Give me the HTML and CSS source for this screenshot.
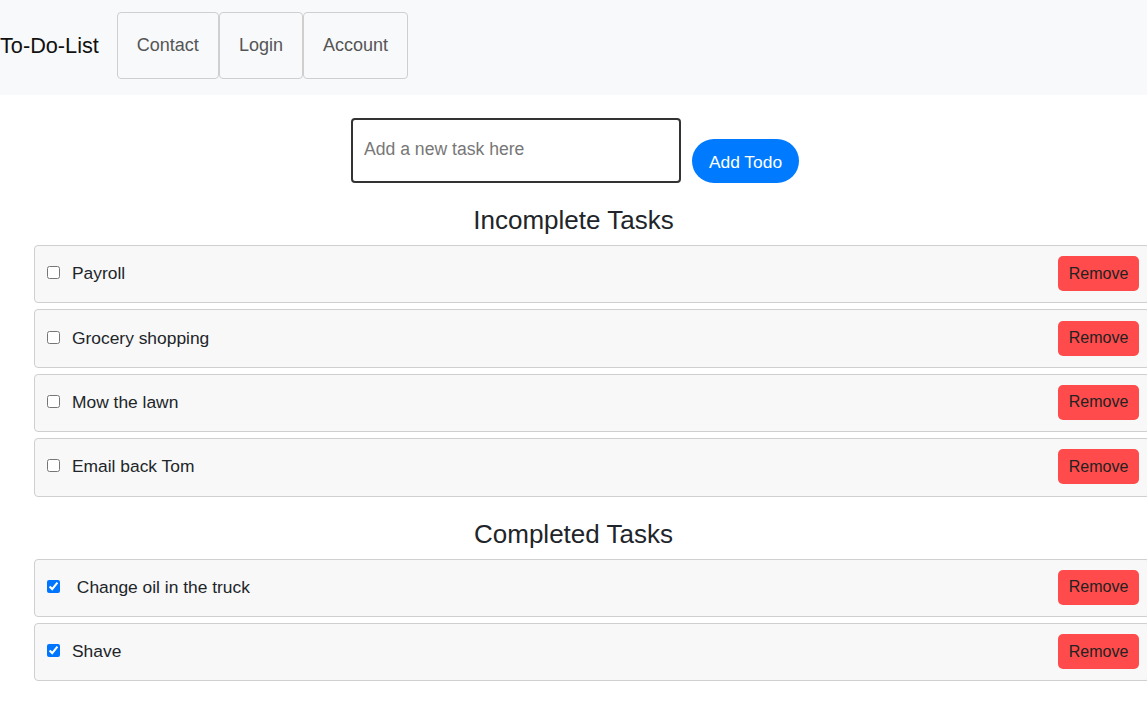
FILE: index.html
```html
<!DOCTYPE html>
<html lang="en">
<head>
<meta charset="utf-8">
<title>To-Do-List</title>
<link rel="stylesheet" href="styles.css">
</head>
<body>
<nav class="navbar">
  <span class="brand">To-Do-List</span>
  <ul class="nav-links">
    <li><a class="nav-btn" href="#">Contact</a></li>
    <li><a class="nav-btn" href="#">Login</a></li>
    <li><a class="nav-btn" href="#">Account</a></li>
  </ul>
</nav>
<main class="main">
  <form class="add-row">
    <input class="task-input" type="text" placeholder="Add a new task here">
    <button class="add-btn" type="button">Add Todo</button>
  </form>

  <h2 class="section-title">Incomplete Tasks</h2>
  <ul class="task-list">
    <li class="task"><label class="task-label"><input type="checkbox" class="task-check"><span class="task-text">Payroll</span></label><button class="remove-btn" type="button">Remove</button></li>
    <li class="task"><label class="task-label"><input type="checkbox" class="task-check"><span class="task-text">Grocery shopping</span></label><button class="remove-btn" type="button">Remove</button></li>
    <li class="task"><label class="task-label"><input type="checkbox" class="task-check"><span class="task-text">Mow the lawn</span></label><button class="remove-btn" type="button">Remove</button></li>
    <li class="task"><label class="task-label"><input type="checkbox" class="task-check"><span class="task-text">Email back Tom</span></label><button class="remove-btn" type="button">Remove</button></li>
  </ul>

  <h2 class="section-title">Completed Tasks</h2>
  <ul class="task-list">
    <li class="task"><label class="task-label"><input type="checkbox" class="task-check" checked><span class="task-text">&nbsp;Change oil in the truck</span></label><button class="remove-btn" type="button">Remove</button></li>
    <li class="task"><label class="task-label"><input type="checkbox" class="task-check" checked><span class="task-text">Shave</span></label><button class="remove-btn" type="button">Remove</button></li>
  </ul>
</main>
</body>
</html>
```

FILE: styles.css
```css
html, body {
  margin: 0;
  padding: 0;
  background: #ffffff;
  overflow-x: hidden;
}

body {
  font-family: "Liberation Sans", Arial, sans-serif;
  color: #212529;
}

.navbar {
  display: flex;
  align-items: center;
  background: #f8f9fa;
  padding: 12px 0 16px;
}

.brand {
  font-size: 21.7px;
  color: #111;
  margin-right: 18px;
  line-height: 1;
}

.nav-links {
  display: flex;
  list-style: none;
  margin: 0;
  padding: 0;
  gap: 0;
}

.nav-btn {
  display: block;
  font-size: 18px;
  line-height: 21px;
  color: #555;
  text-decoration: none;
  padding: 22px 19px;
  border: 1px solid #cfcfcf;
  border-radius: 4px;
  background: #f8f9fa;
}

.main {
  display: flex;
  flex-direction: column;
}

.add-row {
  display: flex;
  justify-content: center;
  align-items: flex-end;
  gap: 11px;
  margin: 23px 0 0;
  padding-left: 3px;
}

.task-input {
  box-sizing: border-box;
  width: 330px;
  height: 65px;
  border: 2px solid #333;
  border-radius: 4px;
  padding: 0 11px 2px;
  font-family: "Liberation Sans", Arial, sans-serif;
  font-size: 17.6px;
  color: #333;
  background: #fff;
  outline: none;
}

.task-input::placeholder {
  color: #777;
}

.add-btn {
  box-sizing: border-box;
  width: 107px;
  height: 44px;
  padding: 3px 0 0;
  border: none;
  border-radius: 22px;
  background: #007bff;
  color: #fff;
  font-family: "Liberation Sans", Arial, sans-serif;
  font-size: 17.4px;
}

.section-title {
  text-align: center;
  font-weight: normal;
  font-size: 26px;
  line-height: 31px;
  margin: 22px 0 9px;
  color: #212529;
}

.task-list {
  list-style: none;
  margin: 0 0 0 34px;
  padding: 0;
  display: flex;
  flex-direction: column;
  gap: 6px;
  width: 1116px;
}

.task {
  box-sizing: border-box;
  display: flex;
  align-items: center;
  justify-content: space-between;
  height: 58.4px;
  padding: 10px 10px 11px 9px;
  background: #f8f8f8;
  border: 1px solid #cfcfcf;
  border-radius: 4px;
}

.task-label {
  display: flex;
  align-items: center;
  font-size: 17.4px;
  color: #212529;
}

.task-check {
  width: 13px;
  height: 13px;
  margin: 0 12px 2px 3px;
}

.remove-btn {
  box-sizing: border-box;
  width: 81px;
  height: 35px;
  border: none;
  border-radius: 5px;
  background: #ff4b4b;
  color: #222;
  font-family: "Liberation Sans", Arial, sans-serif;
  font-size: 16px;
  padding: 0;
}
```
